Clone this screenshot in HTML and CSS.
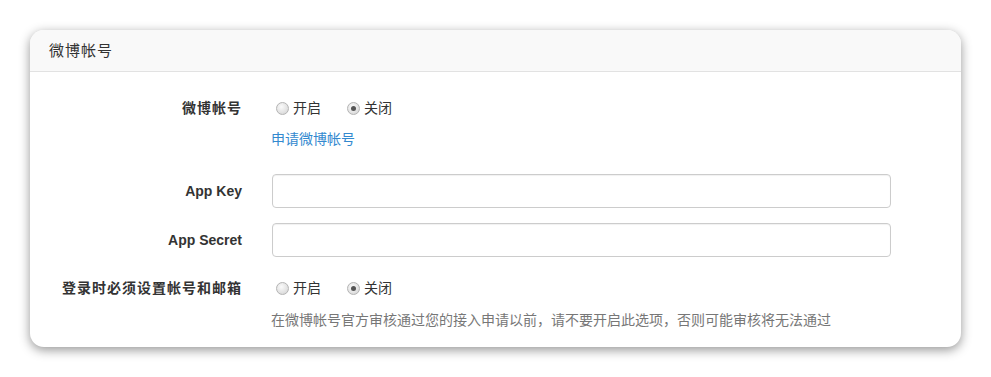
FILE: index.html
```html
<!DOCTYPE html>
<html lang="zh-CN">
<head>
  <meta charset="UTF-8">
  <title>微博帐号</title>
  <link rel="stylesheet" href="styles.css">
</head>
<body>

<div class="panel">
  <div class="panel-heading">微博帐号</div>
  <div class="panel-body">

    <div class="form-row">
      <div class="form-label cn">微博帐号</div>
      <div class="form-field">
        <div class="radios">
          <label class="radio"><span class="dot"></span>开启</label>
          <label class="radio"><span class="dot checked"></span>关闭</label>
        </div>
        <a class="apply-link" href="#">申请微博帐号</a>
      </div>
    </div>

    <div class="form-row row-input">
      <div class="form-label">App Key</div>
      <div class="form-field">
        <input type="text" class="text-input">
      </div>
    </div>

    <div class="form-row row-input row-tight">
      <div class="form-label">App Secret</div>
      <div class="form-field">
        <input type="text" class="text-input">
      </div>
    </div>

    <div class="form-row row-last">
      <div class="form-label cn">登录时必须设置帐号和邮箱</div>
      <div class="form-field">
        <div class="radios">
          <label class="radio"><span class="dot"></span>开启</label>
          <label class="radio"><span class="dot checked"></span>关闭</label>
        </div>
        <p class="help">在微博帐号官方审核通过您的接入申请以前，请不要开启此选项，否则可能审核将无法通过</p>
      </div>
    </div>

  </div>
</div>

</body>
</html>
```

FILE: styles.css
```css
body {
  margin: 0;
  padding: 30px;
  background: #fff;
  font-family: "Liberation Sans", "Noto Sans CJK SC", sans-serif;
  font-size: 14px;
  color: #333;
}

.panel {
  background: #fff;
  border-radius: 14px;
  box-shadow: 0 3px 11px rgba(0, 0, 0, 0.42);
  overflow: hidden;
}

.panel-heading {
  height: 41px;
  line-height: 41px;
  padding-left: 19px;
  background: #f9f9f9;
  border-bottom: 1px solid #e2e2e2;
  font-size: 15px;
  letter-spacing: 1px;
  color: #333;
}

.panel-body {
  padding: 26px 0 17px;
}

.form-row {
  display: flex;
  align-items: flex-start;
}

.form-label {
  width: 212px;
  flex-shrink: 0;
  margin-right: 30px;
  text-align: right;
  font-weight: bold;
  line-height: 20px;
}

.form-label.cn {
  letter-spacing: 1px;
  margin-right: 29px;
}

.form-field {
  flex: 1;
}

.radios {
  display: flex;
  height: 20px;
  line-height: 20px;
}

.radio {
  display: flex;
  align-items: center;
  margin-right: 21px;
}

.dot {
  width: 11px;
  height: 11px;
  border: 1px solid #b4b4b4;
  border-radius: 50%;
  background: radial-gradient(circle at 40% 35%, #fafafa 0%, #e2e2e2 60%, #cfcfcf 100%);
  margin: 0 4px 0 5px;
  position: relative;
}

.dot.checked::after {
  content: "";
  position: absolute;
  left: 3px;
  top: 3px;
  width: 5px;
  height: 5px;
  border-radius: 50%;
  background: #555;
}

.apply-link {
  display: block;
  margin-top: 11px;
  line-height: 20px;
  color: #3389cf;
  text-decoration: none;
}

.row-input {
  margin-top: 25px;
  align-items: center;
}

.row-tight {
  margin-top: 15px;
}

.text-input {
  display: block;
  width: 619px;
  height: 34px;
  box-sizing: border-box;
  border: 1px solid #ccc;
  border-radius: 4px;
  box-shadow: inset 0 1px 1px rgba(0, 0, 0, 0.06);
  padding: 6px 10px;
  font: inherit;
}

.row-last {
  margin-top: 21px;
}

.help {
  margin: 12px 0 0;
  line-height: 20px;
  color: #777;
}
```
